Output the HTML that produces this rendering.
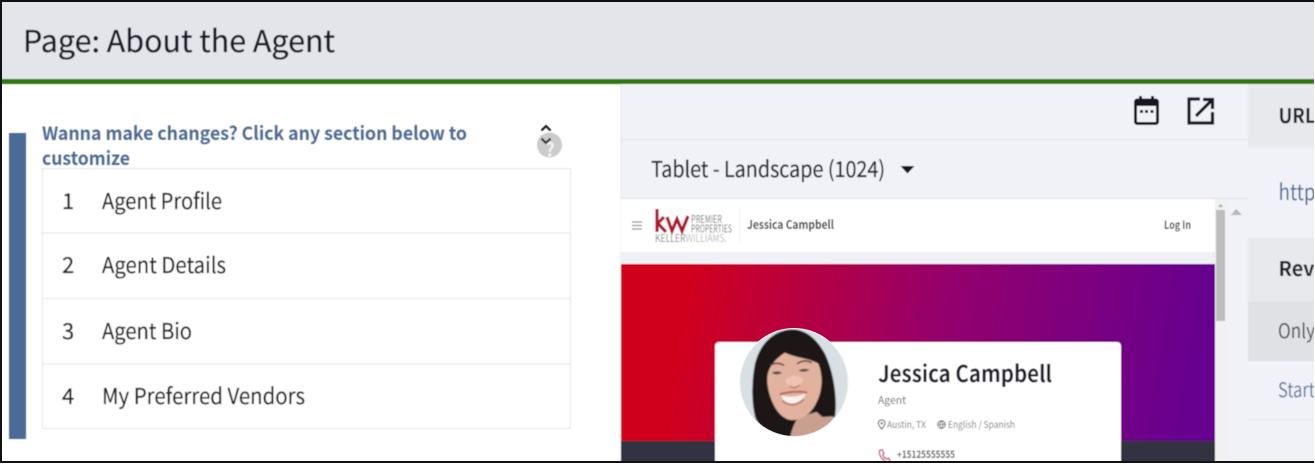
<!DOCTYPE html>
<html>
<head>
<meta charset="utf-8">
<style>
html,body{margin:0;padding:0;background:#fff;width:1315px;height:464px;overflow:hidden}
svg{display:block}
text{font-family:"Noto Sans CJK JP","Liberation Sans",sans-serif;white-space:pre}
</style>
</head>
<body>
<svg width="1315" height="464" viewBox="0 0 1315 464" xmlns="http://www.w3.org/2000/svg">
<defs>
<linearGradient id="g" gradientUnits="userSpaceOnUse" x1="690" y1="290" x2="1190" y2="370">
<stop offset="0" stop-color="#d0011f"/><stop offset=".5" stop-color="#94006c"/><stop offset="1" stop-color="#68008f"/>
</linearGradient>
<clipPath id="av"><circle cx="794" cy="382.500" r="53.500"/></clipPath>
<filter id="b1" x="-5%" y="-5%" width="110%" height="110%"><feGaussianBlur stdDeviation="0.4"/></filter>
<filter id="b2" x="-5%" y="-5%" width="110%" height="110%"><feGaussianBlur stdDeviation="2.500"/></filter>
</defs>
<rect width="1315" height="464" fill="#fff"/>
<g filter="url(#b1)">
<!-- header -->
<rect x="0" y="0" width="1315" height="80" fill="#e4e5ea"/>
<rect x="0" y="79" width="1315" height="5" fill="#2f790a"/>
<text x="23" y="52" font-size="30" fill="#161a25" stroke="#161a25" stroke-width=".3" textLength="312" lengthAdjust="spacingAndGlyphs">Page: About the Agent</text>

<!-- left panel -->
<rect x="9" y="133" width="17" height="306" fill="#4d6a96"/>
<text x="42" y="140" font-size="18.500" font-weight="700" fill="#4f6a94" textLength="425" lengthAdjust="spacingAndGlyphs">Wanna make changes? Click any section below to</text>
<text x="42" y="165" font-size="18.500" font-weight="700" fill="#4f6a94" textLength="88" lengthAdjust="spacingAndGlyphs">customize</text>
<circle cx="549.500" cy="145" r="12.500" fill="#cbcbcb"/>
<text x="550" y="157" font-size="19" font-weight="700" fill="#f2f2f2" text-anchor="middle">?</text>
<path d="M541.500 130.500 L546 126 L550.500 130.500 M541.500 138.500 L546 143 L550.500 138.500" fill="none" stroke="#111" stroke-width="2"/>
<rect x="42.500" y="168.500" width="528" height="260" fill="#fff" stroke="#e2e3e6"/>
<path d="M42 233H571M42 298.500H571M42 364H571" stroke="#e2e3e6" stroke-width="1"/>
<g font-size="22" fill="#222" stroke="#222" stroke-width=".25">
<text x="62" y="209">1</text>
<text x="102" y="209" textLength="120" lengthAdjust="spacingAndGlyphs">Agent Profile</text>
<text x="62" y="273">2</text>
<text x="102" y="273" textLength="124" lengthAdjust="spacingAndGlyphs">Agent Details</text>
<text x="62" y="339">3</text>
<text x="102" y="339" textLength="90" lengthAdjust="spacingAndGlyphs">Agent Bio</text>
<text x="62" y="404">4</text>
<text x="102" y="404" textLength="203" lengthAdjust="spacingAndGlyphs">My Preferred Vendors</text>
</g>

<!-- center panel -->
<rect x="621" y="84" width="627" height="380" fill="#f1f2f7"/>
<rect x="620.500" y="84" width="1" height="380" fill="#e4e5e9"/>
<rect x="621" y="139" width="627" height="1" fill="#dfe0e4"/>
<rect x="621" y="198" width="627" height="1" fill="#dfe0e4"/>
<!-- calendar -->
<rect x="1135.500" y="100" width="22" height="23.500" rx="2" fill="#f1f2f7" stroke="#15171c" stroke-width="3"/>
<rect x="1135" y="99" width="23" height="7" fill="#15171c"/>
<rect x="1139" y="96" width="3" height="5" fill="#15171c"/>
<rect x="1151" y="96" width="3" height="5" fill="#15171c"/>
<rect x="1140" y="110" width="3" height="3" fill="#15171c"/>
<rect x="1145" y="110" width="3" height="3" fill="#15171c"/>
<rect x="1150.500" y="110" width="3" height="3" fill="#15171c"/>
<!-- external link -->
<path d="M1200 99H1189V123H1212.500V112" fill="none" stroke="#15171c" stroke-width="3.200"/>
<path d="M1196 116L1211 101M1203 99.500H1212.500V109" fill="none" stroke="#15171c" stroke-width="3.200"/>
<!-- device -->
<text x="651" y="177" font-size="22" fill="#22252f" stroke="#22252f" stroke-width=".25" textLength="234" lengthAdjust="spacingAndGlyphs">Tablet - Landscape (1024)</text>
<path d="M900.500 166H914.500L907.500 173.500Z" fill="#15171c"/>

<!-- preview nav -->
<rect x="621" y="199" width="594" height="53" fill="#fff"/>
<path d="M632 222H642M632 225.500H642M632 229H642" stroke="#8b8b8b" stroke-width="1.200"/>
<path d="M657 209V232M657 224L664 217M658 223.500L666 232M667 217L672 231L677 219L682 231L688 216" fill="none" stroke="#b3142c" stroke-width="3.200"/>
<text x="691" y="223" font-size="11" fill="#777" textLength="31" lengthAdjust="spacingAndGlyphs">PREMIER</text>
<text x="691" y="232.500" font-size="11" fill="#777" textLength="41" lengthAdjust="spacingAndGlyphs">PROPERTIES</text>
<text x="655" y="242" font-size="10.500" fill="#888" textLength="72" lengthAdjust="spacingAndGlyphs">KELLER<tspan fill="#bbb">WILLIAMS.</tspan></text>
<rect x="739" y="207" width="1" height="36" fill="#efefef"/>
<text x="747" y="229" font-size="12" font-weight="700" fill="#3a3a3a" textLength="87" lengthAdjust="spacingAndGlyphs">Jessica Campbell</text>
<text x="1164" y="229" font-size="11" font-weight="700" fill="#4a4a4a" textLength="27" lengthAdjust="spacingAndGlyphs">Log In</text>

<!-- preview body -->
<rect x="621" y="252" width="594" height="12" fill="#f0f1f6"/>
<rect x="621" y="264" width="594" height="177" fill="url(#g)"/>
<rect x="621" y="441" width="594" height="23" fill="#30333f"/>
<rect x="715" y="342" width="406" height="124" rx="4" fill="#fff"/>
<rect x="1215" y="199" width="11" height="265" fill="#f1f1f1"/>
<rect x="1216" y="210" width="9" height="111" fill="#bdbdbd"/>
<path d="M1218 207L1220.500 204L1223 207Z" fill="#a5a5a5"/>
<path d="M1231 215L1236 209L1242 215Z" fill="#b4b6ba"/>

<!-- card text -->
<text x="878" y="382" font-size="23" font-weight="700" fill="#1b1f2a" textLength="174" lengthAdjust="spacingAndGlyphs">Jessica Campbell</text>
<text x="878" y="404" font-size="11" fill="#666" textLength="28" lengthAdjust="spacingAndGlyphs">Agent</text>
<path d="M881.700 429C879.500 426.500 878.300 424.700 878.300 423.300A3.400 3.400 0 0 1 885.100 423.300C885.100 424.700 883.900 426.500 881.700 429Z" fill="none" stroke="#444" stroke-width="1"/>
<circle cx="881.700" cy="423.300" r="1.100" fill="#444"/>
<text x="887" y="428" font-size="9.500" fill="#777" textLength="39" lengthAdjust="spacingAndGlyphs">Austin, TX</text>
<circle cx="941.500" cy="424.500" r="3.800" fill="none" stroke="#666" stroke-width="1"/>
<path d="M937.700 424.500H945.300M941.500 420.700C939.500 423 939.500 426 941.500 428.300C943.500 426 943.500 423 941.500 420.700" fill="none" stroke="#666" stroke-width=".8"/>
<text x="948" y="428" font-size="9.500" fill="#777" textLength="67" lengthAdjust="spacingAndGlyphs">English / Spanish</text>
<path d="M879.500 450.500L882 449.800L884 453.500L882.800 455C883.500 457 885 458.500 887 459L888.500 458L890 460.500L889 462.500C884 462.500 878.500 456 879.500 450.500Z" fill="none" stroke="#c2397c" stroke-width="1.300"/>
<text x="897" y="458" font-size="10" font-weight="700" fill="#555" textLength="58" lengthAdjust="spacingAndGlyphs">+15125555555</text>

<!-- right panel -->
<rect x="1248" y="84" width="67" height="64" fill="#e8e9ed"/>
<rect x="1248" y="148" width="67" height="90" fill="#f1f2f7"/>
<rect x="1248" y="238" width="67" height="64" fill="#e8e9ed"/>
<rect x="1248" y="302" width="67" height="59" fill="#dfe1e5"/>
<rect x="1248" y="361" width="67" height="103" fill="#f1f2f7"/>
<rect x="1248" y="419" width="67" height="1" fill="#e6e7eb"/>
<text x="1278.500" y="123" font-size="20.500" font-weight="700" fill="#1f222b" textLength="37" lengthAdjust="spacingAndGlyphs">URL</text>
<text x="1278.500" y="200" font-size="22" fill="#4a6a99" textLength="46" lengthAdjust="spacingAndGlyphs">https</text>
<text x="1278.500" y="276" font-size="20.500" font-weight="700" fill="#1f222b" textLength="36" lengthAdjust="spacingAndGlyphs">Rev</text>
<text x="1278" y="338" font-size="20" fill="#4c4c4c" textLength="37" lengthAdjust="spacingAndGlyphs">Only</text>
<text x="1278" y="397" font-size="20" fill="#5a7ba0" textLength="37" lengthAdjust="spacingAndGlyphs">Start</text>
</g>

<!-- avatar -->
<circle cx="794" cy="382.500" r="54.500" fill="#eef0f2"/>
<g clip-path="url(#av)">
<g transform="translate(735 322) scale(.33333)" filter="url(#b2)">
<rect x="0" y="0" width="360" height="360" fill="#d8e0e4"/>
<path d="M170 22C115 25 75 65 60 125C48 185 50 250 62 290C85 335 125 350 175 350L215 320L300 285C308 225 295 145 268 92C242 45 208 22 170 22Z" fill="#1c1719"/>
<path d="M165 350C170 320 180 300 190 285L245 270L262 285L296 283L280 320L215 360H165Z" fill="#c9a08f"/>
<path d="M98 190C92 150 108 120 150 92C180 108 222 108 250 125C266 165 262 212 240 250C222 280 198 294 170 294C135 292 106 245 98 190Z" fill="#e2b29e"/>
<path d="M150 175Q175 150 205 172Q200 190 176 198Q155 192 150 175Z" fill="#edc4b2"/>
<path d="M110 153Q125 143 142 153Q125 161 110 153ZM190 146Q205 136 224 144Q205 153 190 146Z" fill="#4e4546"/>
<path d="M106 130Q125 118 147 130M186 126Q205 110 230 122" fill="none" stroke="#5a4240" stroke-width="5"/>
<path d="M138 220Q175 230 212 214Q200 246 172 246Q146 244 138 220Z" fill="#f8f2ee"/>
<path d="M134 217Q175 206 216 211" fill="none" stroke="#b8605c" stroke-width="6"/>
<path d="M142 236Q172 262 206 232" fill="none" stroke="#c27470" stroke-width="6"/>
<path d="M163 192Q178 202 194 190" fill="none" stroke="#bf8470" stroke-width="5"/>
</g>
</g>

<!-- outer frame -->
<rect x="0" y="0" width="1314" height="2" fill="#111"/>
<rect x="0" y="0" width="2" height="463" fill="#111"/>
<rect x="0" y="461" width="1314" height="2" fill="#111"/>
<rect x="1314" y="0" width="1" height="464" fill="#fff"/>
<rect x="0" y="463" width="1315" height="1" fill="#fff"/>
</svg>
</body>
</html>
